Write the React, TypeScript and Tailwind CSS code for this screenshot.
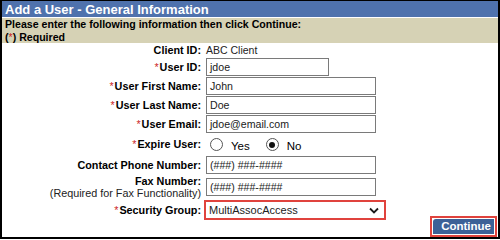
import React from "react";

type FieldRow = {
  label: string;
  required?: boolean;
  value: string;
  width: string;
};

const textRows: FieldRow[] = [
  { label: "User ID:", required: true, value: "jdoe", width: "w-[123px]" },
  { label: "User First Name:", required: true, value: "John", width: "w-[170px]" },
  { label: "User Last Name:", required: true, value: "Doe", width: "w-[170px]" },
  { label: "User Email:", required: true, value: "jdoe@email.com", width: "w-[170px]" },
];

function Label({ text, required }: { text: string; required?: boolean }) {
  return (
    <div className="flex items-center justify-end font-bold text-[10.8px] whitespace-nowrap">
      {required && <span className="text-[#cc1f1f] font-normal mr-[1px]">*</span>}
      {text}
    </div>
  );
}

function TextBox({ value, width }: { value: string; width: string }) {
  return (
    <div className={`${width} h-[18px] border border-[#7a7a7a] bg-white px-[3px] flex items-center text-[10.6px] text-[#1a1a1a]`}>
      {value}
    </div>
  );
}

function Radio({ checked }: { checked?: boolean }) {
  return (
    <span className="w-[13px] h-[13px] rounded-full border border-[#555] bg-white flex items-center justify-center">
      {checked && <span className="w-[6px] h-[6px] rounded-full bg-[#111]" />}
    </span>
  );
}

export default function App() {
  return (
    <div className="w-[500px] h-[239px] border-2 border-t border-black bg-white flex flex-col font-['Liberation_Sans',Arial,sans-serif] text-[10.5px] leading-[13px] text-black">
      {/* Header */}
      <div className="h-[19px] bg-[#4f72ad] border-b border-white text-white font-bold text-[13px] px-[3px] flex items-center">
        Add a User - General Information
      </div>

      {/* Instructions */}
      <div className="h-[25px] bg-[#d6d2b5] px-[3px] font-bold text-[10.6px] leading-[13px]">
        <div>Please enter the following information then click Continue:</div>
        <div>
          (<span className="text-[#cc1f1f] font-normal">*</span>) Required
        </div>
      </div>

      {/* Form */}
      <div className="grid grid-cols-[199px_1fr] gap-x-[5px] gap-y-[1px]">
        <Label text="Client ID:" />
        <div className="h-[14px] flex items-center text-[#222]">ABC Client</div>

        {textRows.map((r) => (
          <React.Fragment key={r.label}>
            <Label text={r.label} required={r.required} />
            <TextBox value={r.value} width={r.width} />
          </React.Fragment>
        ))}

        <Label text="Expire User:" required />
        <div className="h-[21px] flex items-center pl-[4px] text-[11.5px]">
          <Radio />
          <span className="ml-[8px] mt-[3px]">Yes</span>
          <span className="ml-[16px]">
            <Radio checked />
          </span>
          <span className="ml-[8px] mt-[3px]">No</span>
        </div>

        <Label text="Contact Phone Number:" />
        <TextBox value="(###) ###-####" width="w-[170px]" />

        <div className="h-[24px] flex flex-col items-end justify-center leading-[12px] text-[10.8px] whitespace-nowrap">
          <span className="font-bold">Fax Number:</span>
          <span className="text-[#222]">(Required for Fax Functionality)</span>
        </div>
        <div className="flex items-center">
          <TextBox value="(###) ###-####" width="w-[170px]" />
        </div>

        <Label text="Security Group:" required />
        <div className="ml-[-2px] w-[182px] h-[20px] border-2 border-[#e0433d] bg-white pl-[3px] pr-[5px] flex items-center justify-between text-[11px] text-[#222]">
          <span>MultiAssocAccess</span>
          <svg width="10" height="7" viewBox="0 0 10 7">
            <polyline points="1,1.5 5,5.5 9,1.5" fill="none" stroke="#1a1a1a" strokeWidth="1.8" />
          </svg>
        </div>
      </div>

      {/* Footer */}
      <div className="flex justify-end mt-[-4px] pr-[1px]">
        <div className="w-[67px] h-[21px] border-2 border-[#e0433d] bg-white p-[1px]">
          <div className="h-full bg-[#3c6197] rounded-tl-[3px] text-white font-bold text-[11.5px] flex items-center justify-end pr-[3px]">
            Continue
          </div>
        </div>
      </div>
    </div>
  );
}
